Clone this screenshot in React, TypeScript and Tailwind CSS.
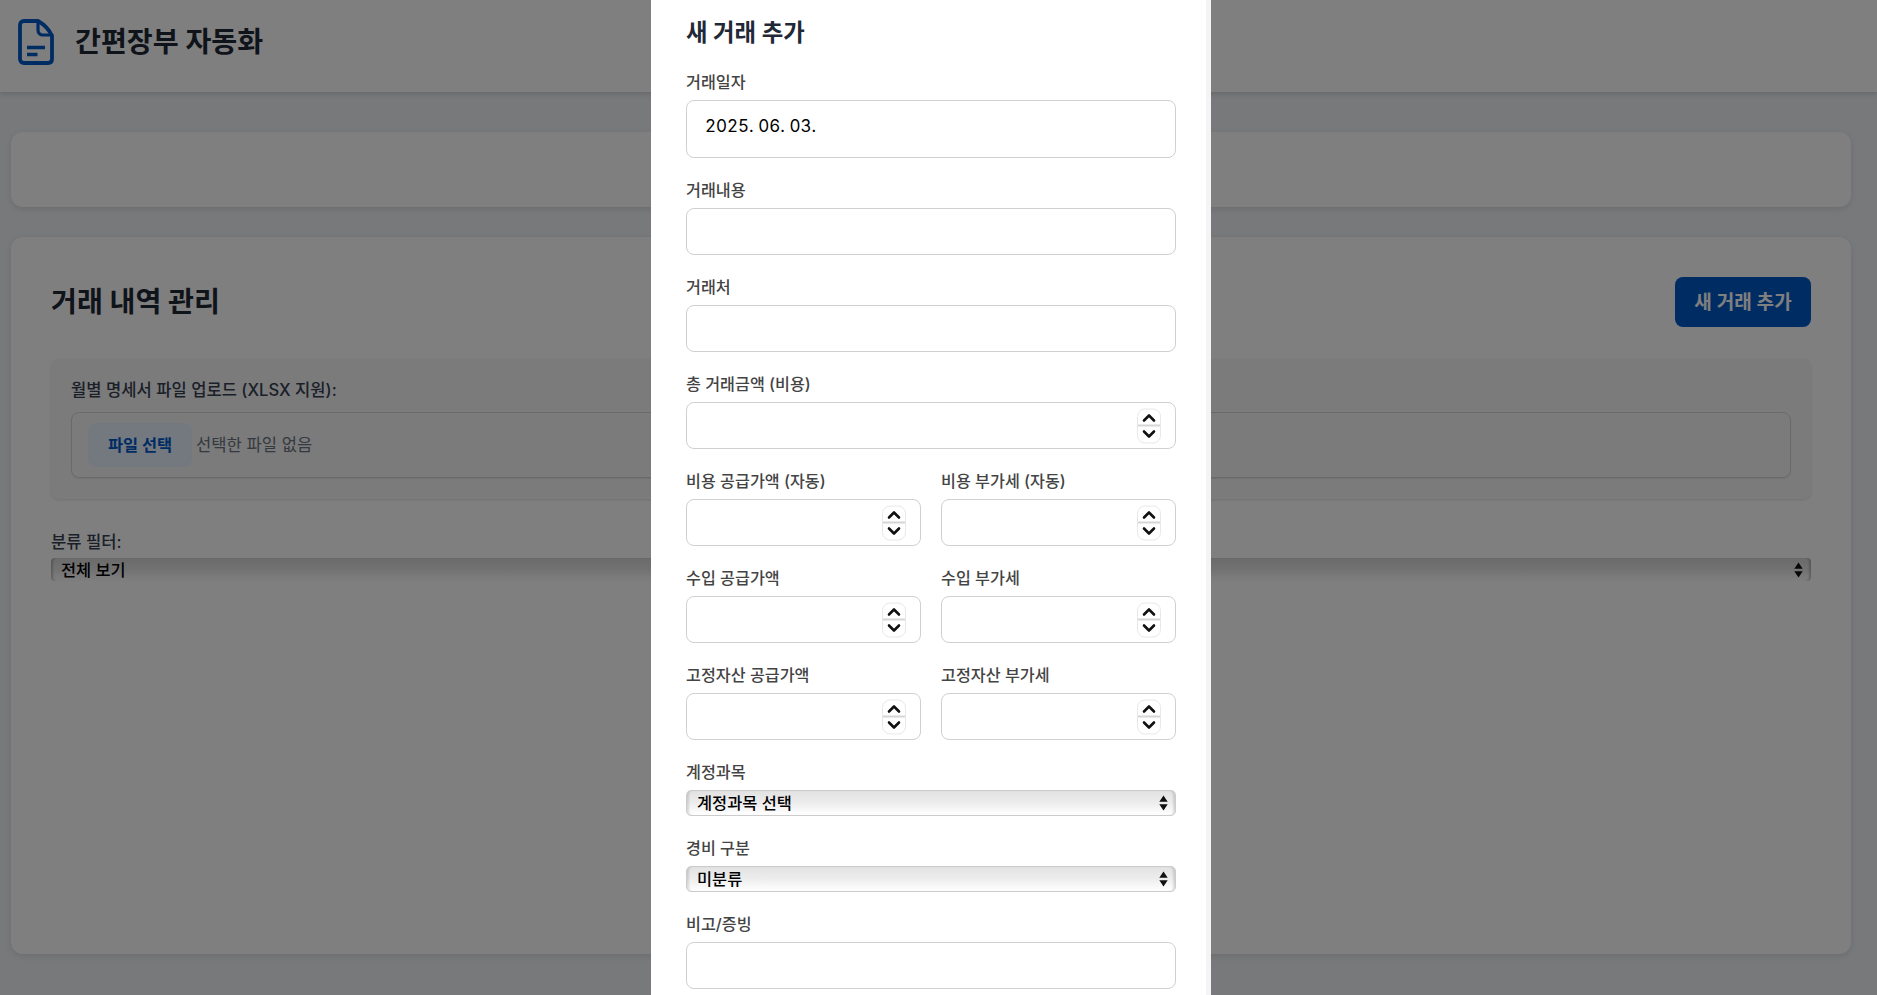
const FONT = "[font-family:Inter,'Noto_Sans_CJK_KR',sans-serif]";

const SelectArrows = () => (
  <svg className="absolute right-[8px] top-1/2 -translate-y-1/2 pointer-events-none" width="9" height="16" viewBox="0 0 9 16">
    <path d="M4.500 0.500 L8.700 6.700 H0.300 Z M4.500 15.500 L8.700 9.300 H0.300 Z" fill="#111" />
  </svg>
);

const Label = ({ children }: { children: string }) => (
  <label className="block h-6 mb-1.5 text-[16.2px] leading-6 font-medium text-[#444444]">{children}</label>
);

const Spinner = () => (
  <div className="absolute right-[15px] top-1/2 -translate-y-1/2 w-6 h-[35px] rounded-lg border border-[#e8e8e8] bg-white flex flex-col items-center justify-between py-[4px] text-[#111]">
    <svg width="14" height="9" viewBox="0 0 14 9" fill="none" stroke="currentColor" strokeWidth="2.600" strokeLinecap="round" strokeLinejoin="round">
      <path d="M2 7 L7 2 L12 7" />
    </svg>
    <div className="absolute left-0 right-0 top-1/2 h-0.5 -translate-y-1/2 bg-[#d6d6d6]" />
    <svg width="14" height="9" viewBox="0 0 14 9" fill="none" stroke="currentColor" strokeWidth="2.600" strokeLinecap="round" strokeLinejoin="round">
      <path d="M2 2 L7 7 L12 2" />
    </svg>
  </div>
);

const TextField = ({ label }: { label: string }) => (
  <div className="mb-5">
    <Label>{label}</Label>
    <input type="text" className="block w-full h-[47px] rounded-lg border border-[#d0d0d0] bg-white px-[15px] outline-none" />
  </div>
);

const NumberField = ({ label }: { label: string }) => (
  <div className="mb-5">
    <Label>{label}</Label>
    <div className="relative h-[47px]">
      <input type="text" className="block w-full h-full rounded-lg border border-[#d0d0d0] bg-white px-[15px] outline-none" />
      <Spinner />
    </div>
  </div>
);

const SelectField = ({ label, value }: { label: string; value: string }) => (
  <div className="mb-5">
    <Label>{label}</Label>
    <div className="relative">
      <select
        defaultValue={value}
        className="block w-full h-[26px] appearance-none rounded-[5px] border border-[#cccccc] bg-linear-to-b from-[#e2e2e2] via-[#ededed] to-white pl-[10px] text-[16.4px] leading-5 font-medium text-black outline-none shadow-[inset_3px_0_2px_-1px_rgba(0,0,0,0.12),inset_-3px_0_2px_-1px_rgba(0,0,0,0.12)]"
      >
        <option>{value}</option>
      </select>
      <SelectArrows />
    </div>
  </div>
);

export default function App() {
  return (
    <div className={`relative h-[995px] overflow-hidden bg-[#f0f2f5] ${FONT}`}>
      <header className="h-[92px] bg-white flex items-center pl-[18px] pb-[9px] shadow-[0_2px_5px_rgba(0,0,0,0.15)]">
        <svg width="36" height="46" viewBox="0 0 36 46" fill="none" stroke="#0058c8" strokeWidth="3.800" strokeLinejoin="round" strokeLinecap="round">
          <path d="M6 2 H20 C27 6 31 10 34 17 V40 C34 42.500 32.500 44 30 44 H6 C3.500 44 2 42.500 2 40 V6 C2 3.500 3.500 2 6 2 Z" />
          <path d="M20 2 V11 C20 14 22 16 25 16 H34" strokeWidth="3.200" />
          <path d="M9 28.500 H27 M9 35.500 H19.500" strokeLinecap="butt" strokeWidth="3.400" />
        </svg>
        <h1 className="ml-[21px] text-[28.2px] leading-9 font-bold text-[#1f2937]">간편장부 자동화</h1>
      </header>

      <main className="pl-[11px] pr-[26px] pt-10">
        <section className="h-[75px] rounded-xl bg-white shadow-[0_2px_6px_rgba(0,0,0,0.1)]" />

        <section className="mt-[30px] h-[717px] rounded-xl bg-white pl-10 pr-10 pt-10 shadow-[0_2px_6px_rgba(0,0,0,0.1)]">
          <div className="flex items-center justify-between h-[50px]">
            <h2 className="text-[28.2px] leading-9 font-bold text-[#1f2937]">거래 내역 관리</h2>
            <button className="h-[50px] w-[136px] rounded-lg bg-[#0058c8] text-[19.1px] font-semibold text-white">새 거래 추가</button>
          </div>

          <div className="mt-8 h-[140px] rounded-lg bg-[#f6f7f8] px-5 pt-[19px] shadow-[0_1px_3px_rgba(0,0,0,0.12)]">
            <div className="h-6 mb-[10px] text-[16.6px] leading-6 font-medium text-[#374151]">월별 명세서 파일 업로드 (XLSX 지원):</div>
            <div className="h-[66px] rounded-lg border border-[#d0d5da] shadow-[0_1px_1px_rgba(0,0,0,0.08)] flex items-center pl-[16px]">
              <button className="h-11 w-[104px] rounded-lg bg-[#e9f1ff] text-[16.4px] font-bold text-[#0058c8]">파일 선택</button>
              <span className="ml-[4px] text-[16.6px] text-[#6b7280]">선택한 파일 없음</span>
            </div>
          </div>

          <div className="mt-[31px] h-6 mb-1 text-[16.6px] leading-6 font-medium text-[#374151]">분류 필터:</div>
          <div className="relative">
            <select defaultValue="전체 보기" className="block w-full h-[23px] appearance-none rounded-[4px] bg-linear-to-b from-[#d6d6d6] via-[#e4e4e4] to-white pl-[10px] text-[16.4px] leading-5 font-medium text-black outline-none shadow-[inset_3px_0_2px_-1px_rgba(0,0,0,0.2),inset_-3px_0_2px_-1px_rgba(0,0,0,0.2)]">
              <option>전체 보기</option>
            </select>
            <SelectArrows />
          </div>
        </section>
      </main>

      <div className="absolute inset-0 bg-black/50 flex justify-center pr-[15px]">
        <div className="relative w-[560px] h-full overflow-hidden bg-white px-[35px] pt-[17px]">
          <h3 className="text-[23.4px] leading-8 font-bold text-[#1f2937] mb-[21px]">새 거래 추가</h3>

          <div className="mb-5">
            <Label>거래일자</Label>
            <div className="h-[58px] rounded-lg border border-[#d0d0d0] bg-white flex items-center pl-[18px] pb-[5px] text-[17px] text-black tabular-nums">2025. 06. 03.</div>
          </div>

          <TextField label="거래내용" />
          <TextField label="거래처" />
          <NumberField label="총 거래금액 (비용)" />

          <div className="grid grid-cols-2 gap-x-5">
            <NumberField label="비용 공급가액 (자동)" />
            <NumberField label="비용 부가세 (자동)" />
            <NumberField label="수입 공급가액" />
            <NumberField label="수입 부가세" />
            <NumberField label="고정자산 공급가액" />
            <NumberField label="고정자산 부가세" />
          </div>

          <SelectField label="계정과목" value="계정과목 선택" />
          <SelectField label="경비 구분" value="미분류" />
          <TextField label="비고/증빙" />

          <div className="absolute right-0 top-0 bottom-0 w-[5px] bg-[#f4f4f4]" />
        </div>
      </div>
    </div>
  );
}
